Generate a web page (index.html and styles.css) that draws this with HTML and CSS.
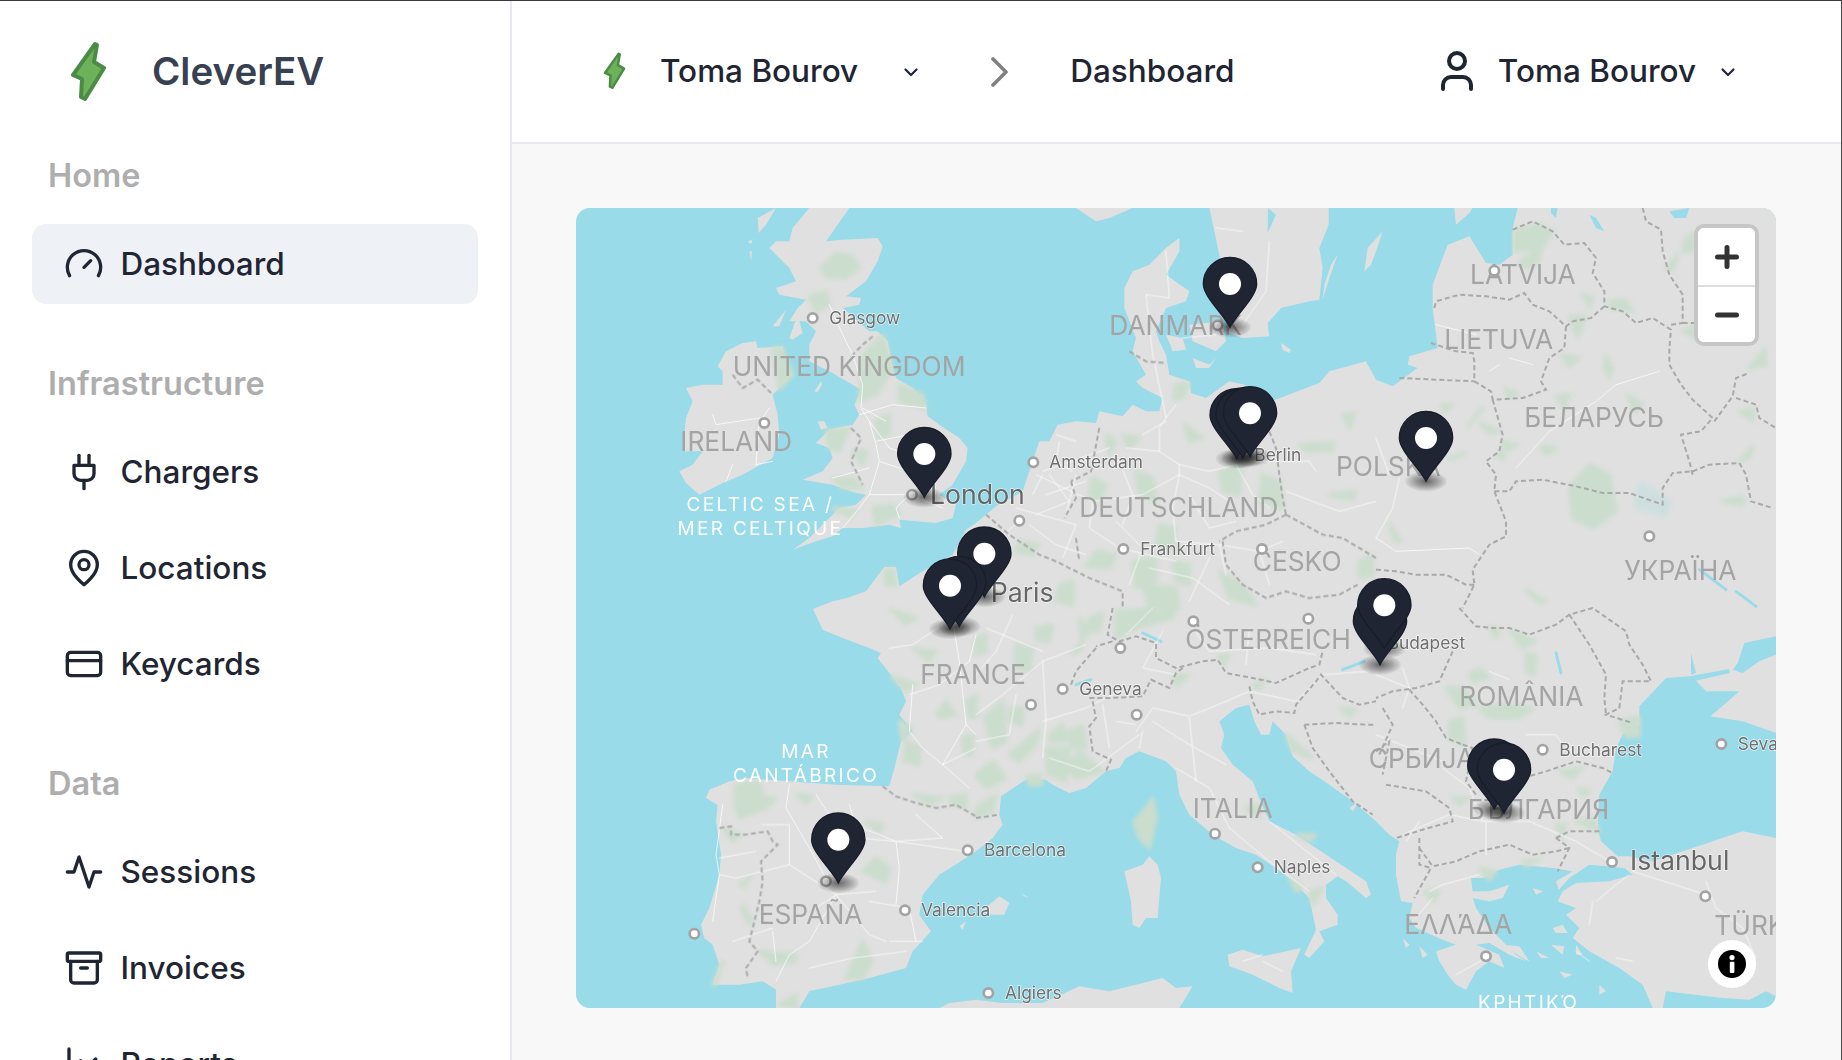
FILE: index.html
```html
<!DOCTYPE html>
<html lang="en">
<head>
<meta charset="utf-8">
<title>CleverEV – Dashboard</title>
<link rel="stylesheet" href="styles.css">
</head>
<body class="app">
<svg class="defs" width="0" height="0" aria-hidden="true">
  <defs>
    <symbol id="bolt" viewBox="0 0 37 60"><path class="bolt-shape" d="M25 3 3 34l9 4-1 18 4 2 19-31-10-6 3-17Z"/></symbol>
    <symbol id="chev" viewBox="0 0 16 16"><path d="m2.5 5.5 5.5 5.5 5.5-5.5"/></symbol>
    <radialGradient id="sh"><stop offset="0" stop-color="#000" stop-opacity=".55"/><stop offset=".55" stop-color="#000" stop-opacity=".28"/><stop offset="1" stop-color="#000" stop-opacity=".03"/></radialGradient>
    <filter id="soft" x="-2%" y="-2%" width="104%" height="104%"><feGaussianBlur stdDeviation="7"/></filter>
    <g id="pin"><path class="pin-body" d="M0 0C-18-38-80-92-80-130A80 80 0 1 1 80-130C80-92 18-38 0 0Z"/><ellipse class="pin-dot" cx="0" cy="-130" rx="33" ry="33"/></g>
    <ellipse id="pinsh" rx="63" ry="30" cx="0" cy="0" fill="url(#sh)"/>
  </defs>
</svg>

<aside class="sidebar">
  <div class="brand">
    <svg class="brand-bolt"><use href="#bolt"/></svg>
    <span class="brand-name">CleverEV</span>
  </div>
  <nav class="nav">
    <section class="nav-section">
      <h2 class="nav-label">Home</h2>
      <a class="nav-item is-active"><svg class="ico" viewBox="0 0 24 24"><path d="m12 14 4-4"/><path d="M3.34 19a10 10 0 1 1 17.32 0"/></svg>Dashboard</a>
    </section>
    <section class="nav-section">
      <h2 class="nav-label">Infrastructure</h2>
      <a class="nav-item"><svg class="ico" viewBox="0 0 24 24"><path d="M12 22v-5"/><path d="M9 8V2"/><path d="M15 8V2"/><path d="M18 8v5a4 4 0 0 1-4 4h-4a4 4 0 0 1-4-4V8Z"/></svg>Chargers</a>
      <a class="nav-item"><svg class="ico" viewBox="0 0 24 24"><path d="M20 10c0 6-8 12-8 12s-8-6-8-12a8 8 0 0 1 16 0Z"/><circle cx="12" cy="10" r="3"/></svg>Locations</a>
      <a class="nav-item"><svg class="ico" viewBox="0 0 24 24"><rect x="2" y="5" width="20" height="14" rx="2"/><path d="M2 10h20"/></svg>Keycards</a>
    </section>
    <section class="nav-section">
      <h2 class="nav-label">Data</h2>
      <a class="nav-item"><svg class="ico" viewBox="0 0 24 24"><path d="M22 12h-4l-3 9L9 3l-3 9H2"/></svg>Sessions</a>
      <a class="nav-item"><svg class="ico" viewBox="0 0 24 24"><rect x="2" y="3" width="20" height="5" rx="1"/><path d="M4 8v11a2 2 0 0 0 2 2h12a2 2 0 0 0 2-2V8"/><path d="M10 12h4"/></svg>Invoices</a>
      <a class="nav-item"><svg class="ico" viewBox="0 0 24 24"><path d="M3 3v18h18"/><path d="m19 9-5 5-4-4-3 3"/></svg>Reports</a>
    </section>
  </nav>
</aside>

<div class="main">
  <header class="topbar">
    <svg class="top-bolt"><use href="#bolt"/></svg>
    <span class="top-org">Toma Bourov</span>
    <svg class="chev chev-org"><use href="#chev"/></svg>
    <svg class="crumb-sep" viewBox="0 0 17 30"><path d="m2 2 13 13L2 28"/></svg>
    <span class="crumb-page">Dashboard</span>
    <div class="user">
      <svg class="user-ico" viewBox="0 0 24 24"><path d="M19 21v-2a4 4 0 0 0-4-4H9a4 4 0 0 0-4 4v2"/><circle cx="12" cy="7" r="4"/></svg>
      <span class="user-name">Toma Bourov</span>
      <svg class="chev"><use href="#chev"/></svg>
    </div>
  </header>

  <main class="content">
    <div class="map">
      <svg class="map-art" viewBox="0 0 3600 2400" role="img" aria-label="Map of Europe with charger locations">
        <rect class="sea" width="3600" height="2400"/>

        <!-- land -->
        <path class="land" d="M700 0H820L750 100 800 95 905 90 920 115 905 160 870 220 810 265 855 270 850 290 800 300 880 370 905 370 935 400 950 480 960 510 1010 540 1050 590 1055 625 1090 650 1150 690 1175 720 1170 760 1130 830 1090 860 1140 890 1130 930 1080 945 970 935 975 960 940 950 860 960 800 960 770 985 720 1000 650 1025 700 990 760 930 790 900 840 890 870 860 840 855 770 830 680 815 740 790 770 750 760 720 720 705 760 665 830 650 850 620 835 590 855 545 830 530 760 490 700 460 700 410 720 370 690 340 640 340 665 300 690 275 610 260 600 240 660 220 640 180 580 120 600 100 640 100 650 60Z"/>
        <path class="land" d="M330 540 380 530 440 530 440 490 425 475 450 430 500 405 540 400 545 420 620 415 625 470 650 500 630 520 590 560 605 620 610 680 590 750 500 800 440 825 370 860 330 825 310 790 350 770 380 730 320 730 330 630 350 580Z"/>
        <path class="land" d="M715 550 735 520 738 530 725 552ZM725 640 745 640 755 660 735 665ZM515 100 530 95 525 108ZM520 130 528 130 525 160ZM545 30 600 0 570 50 548 75ZM590 355 630 305 610 355ZM640 390 665 320 680 375 650 395Z"/>
        <!-- mainland -->
        <path class="land" d="M600 2400 600 2345 560 2320 490 2330 410 2330 430 2270 410 2210 385 2190 375 2150 400 2100 430 2000 435 1940 420 1840 425 1790 390 1770 400 1745 460 1720 510 1710 640 1720 780 1730 940 1735 955 1680 975 1600 1010 1570 970 1520 990 1480 975 1440 905 1350 915 1335 880 1320 800 1290 740 1265 711 1203 770 1180 813 1170 870 1150 925 1077 960 1077 970 1135 1040 1090 1130 1040 1170 965 1200 945 1260 895 1340 850 1360 790 1390 700 1420 700 1445 650 1500 640 1560 645 1570 610 1640 625 1670 590 1710 610 1750 610 1760 570 1700 540 1680 520 1710 500 1670 430 1680 390 1645 300 1645 240 1670 190 1720 170 1770 120 1810 90 1810 130 1770 200 1840 250 1830 280 1770 300 1740 370 1750 400 1770 440 1780 500 1840 520 1845 555 1890 570 1960 520 2005 530 2090 578 2230 525 2260 490 2370 460 2400 515 2450 535 2525 480 2495 470 2500 445 2585 420 2570 300 2570 230 2615 110 2680 85 2730 165 2770 170 2810 140 2810 60 2825 0H3600V2365L3570 2350 3520 2375 3440 2370 3270 2350 3260 2400 3230 2400 3200 2330 3130 2280 3040 2230 2990 2190 3010 2160 2970 2120 3000 2100 2945 2080 2960 2050 3000 2025 3100 2020 3170 2000 3145 1980 3040 1970 2980 2010 2948 2045 2940 2020 2990 1990 2930 1980 2830 1970 2770 1985 2720 2010 2685 2010 2690 2050 2740 2050 2800 2030 2780 2070 2740 2080 2690 2070 2700 2100 2740 2160 2820 2240 2850 2260 2800 2240 2740 2205 2700 2210 2770 2240 2785 2280 2740 2260 2700 2290 2670 2345 2640 2330 2615 2300 2590 2260 2580 2230 2640 2210 2600 2195 2520 2160 2500 2130 2510 2085 2475 2080 2460 2000 2460 1940 2470 1900 2440 1880 2400 1840 2330 1780 2260 1730 2200 1690 2150 1645 2130 1580 2090 1540 2080 1580 2055 1580 2035 1540 2020 1490 1980 1500 1930 1540 1945 1580 1935 1620 1970 1670 2030 1720 2050 1770 2080 1840 2160 1880 2220 1920 2310 1980 2370 2020 2385 2060 2370 2070 2310 2020 2285 2005 2250 2030 2250 2070 2285 2120 2285 2150 2230 2170 2245 2200 2200 2250 2185 2240 2220 2165 2200 2070 2150 2020 2100 1980 2040 1940 1980 1920 1910 1880 1840 1820 1810 1760 1800 1690 1770 1660 1690 1630 1650 1650 1630 1680 1590 1690 1530 1740 1480 1755 1430 1730 1410 1715 1350 1715 1275 1765 1270 1820 1280 1850 1250 1890 1200 1930 1170 1950 1090 2000 1040 2060 1030 2120 1065 2170 1010 2230 990 2280 880 2310 790 2330 700 2350 670 2400Z"/>
        <!-- Black Sea, Azov, Marmara -->
        <path class="sea" d="M3190 1495 3270 1410 3340 1405 3460 1383 3460 1395 3360 1418 3390 1450 3490 1450 3450 1485 3403 1525 3500 1540 3600 1575V1890L3500 1870 3350 1920 3230 1960 3160 1945 3125 1945 3075 1900 3065 1860 3070 1760 3110 1690 3120 1620 3140 1580 3190 1550Z"/>
        <path class="sea" d="M3470 1385 3485 1365 3505 1305 3600 1285V1340L3550 1360 3500 1395ZM3345 1335 3360 1395 3345 1400Z"/>
        <!-- islands -->
        <path class="land" d="M1500 0H1670L1600 30 1560 40 1530 20ZM1900 0 1915 70 1930 140 1945 300 1960 375 2000 390 2080 385 2075 345 2115 300 2200 280 2230 275 2240 180 2230 120 2258 50 2258 0ZM2285 140 2260 210 2240 275 2245 230 2265 170ZM2365 190 2375 120 2420 70 2400 130 2385 170ZM2115 405 2145 425 2140 435 2120 425ZM1770 380 1820 390 1830 425 1790 430ZM1840 350 1940 340 1950 400 1920 430 1850 400ZM1850 450 1900 470 1920 450 1900 480 1860 480ZM2635 0 2690 0 2680 15 2640 50ZM2320 1800 2350 1780 2330 1810Z"/>
        <path class="land" d="M1720 1945 1745 1970 1755 2010 1745 2130 1710 2130 1690 2160 1670 2150 1665 2080 1645 1990 1700 1970ZM1955 2240 2000 2225 2060 2245 2175 2220 2145 2290 2150 2355 2110 2340 2030 2300 1960 2275ZM1215 2110 1240 2090 1270 2065 1300 2085 1285 2120 1245 2120ZM1335 2055 1360 2070 1345 2065ZM1150 2155 1170 2140 1160 2165ZM1090 2400 1120 2385 1200 2375 1280 2385 1400 2385 1510 2335 1600 2350 1680 2330 1760 2310 1800 2340 1850 2335 1810 2400Z"/>
        <path class="land" d="M2930 2160 2960 2150 2975 2175 2940 2175ZM2925 2210 2965 2215 2960 2240ZM2780 2210 2830 2215 2860 2260 2840 2250ZM2870 2040 2900 2050 2880 2060ZM2880 2230 2920 2250 2895 2250ZM2530 2215 2555 2240 2540 2250ZM2480 2190 2500 2210 2490 2220ZM3000 2210 3020 2240 3000 2240ZM2950 2290 2990 2300 2965 2310ZM3070 2330 3090 2350 3070 2360Z"/>

        <!-- inland water -->
        <path class="water" d="M2076 0 2100 20 2075 75ZM2925 0 2945 0 2940 30 2925 15ZM3040 20 3060 30 3085 70 3060 60ZM3280 10 3340 0 3330 30 3295 30Z"/>
        <path class="water-line" d="M3370 1085 3450 1145M3480 1150 3540 1195M2300 1385 2365 1360M1700 1275 1755 1300M1500 1430 1545 1415M2940 1335 2955 1395"/>

        <!-- forests -->
        <g class="forest">
          <path d="M735 180 780 135 830 145 850 180 810 210 750 205ZM700 265 750 250 760 290 720 310ZM590 420 620 420 650 500 610 545ZM750 670 820 660 790 730 760 720ZM860 440 920 380 950 480 900 560 850 580ZM970 530 1040 560 1050 600 970 580ZM770 900 840 905 820 925ZM890 900 950 890 970 920 900 950ZM900 640 940 620 940 680 910 690ZM830 730 870 730 860 770ZM770 810 830 810 860 840 800 840ZM925 1090 950 1080 960 1130 930 1130Z"/>
          <g transform="translate(1200)"><path d="M600 530 640 525 620 570 590 575ZM625 650 680 690 640 700ZM390 680 420 700 400 740ZM440 680 490 690 460 720ZM480 790 530 810 540 880 490 860ZM730 790 800 770 790 860 740 850ZM860 800 910 820 920 900 850 880ZM970 710 1070 705 1070 725 990 730ZM1100 620 1135 615 1120 660ZM1060 860 1140 850 1130 875ZM550 950 600 960 590 1020 540 1010ZM470 1060 540 1050 540 1120 480 1140ZM360 1030 420 1040 400 1080 330 1075ZM590 1060 640 1070 640 1130 600 1120ZM730 1090 800 1130 840 1190 760 1170ZM500 1130 600 1140 610 1200 520 1200ZM250 1130 290 1120 290 1190 240 1180ZM130 1000 190 1010 170 1040 120 1030ZM350 810 390 830 370 880 340 860ZM1150 1060 1190 1040 1190 1100 1150 1110Z"/></g>
          <g transform="translate(2400)"><path d="M415 70 490 50 530 70 500 120 415 130ZM430 165 490 120 490 160 450 180ZM930 90 970 70 950 130 920 130ZM870 180 905 140 890 190ZM620 260 650 270 640 295ZM700 280 750 275 770 310 700 300ZM580 325 630 325 605 390ZM555 440 610 450 580 475ZM690 445 710 480 700 510 685 480ZM540 565 580 560 565 600ZM385 540 425 555 400 570ZM195 590 230 590 205 610ZM275 655 320 600 300 625ZM310 645 370 670 340 675ZM380 700 425 710 395 725 360 745 385 755ZM755 560 800 590 775 610ZM495 715 540 720 510 740ZM1090 610 1130 600 1130 640ZM580 840 640 770 700 800 720 910 650 960 590 930ZM1040 880 1100 865 1100 890ZM1090 760 1130 715 1120 750ZM1120 480 1165 425 1170 470ZM920 370 965 350 965 395ZM450 1145 510 1180 490 1185ZM40 945 75 1000 55 1000ZM215 750 270 735 235 750Z"/></g>
          <g transform="translate(0 1200)"><path d="M945 5 1020 30 990 50ZM970 340 1010 360 980 400ZM990 400 1030 420 1030 470 985 460ZM1080 320 1110 280 1140 320 1100 330ZM1160 390 1190 380 1190 440 1165 440ZM1170 280 1200 260 1200 330 1180 330ZM1010 120 1080 130 1060 160ZM480 530 550 520 560 570 600 570 570 600 490 630 480 600ZM665 560 710 565 690 585ZM440 660 490 680 470 700ZM860 790 900 750 940 780 930 820 880 800ZM870 640 920 650 910 675ZM490 830 525 805 500 835ZM550 1030 660 1040 660 1060 590 1070ZM810 1110 860 1000 890 1060 860 1110ZM1010 560 1100 570 1060 590ZM1120 570 1170 560 1170 600 1130 590ZM410 1130 440 1060 420 1125ZM500 890 530 940 520 950 500 910ZM610 1190 660 1160 660 1200ZM945 205 1020 230 990 250Z"/></g>
          <g transform="translate(1200 1200)"><path d="M120 110 170 120 160 190 120 180ZM340 30 380 15 370 70 330 70ZM180 60 230 50 220 100 180 95ZM420 10 540 0 480 60 420 90ZM480 30 600 0 590 30 480 60ZM25 330 80 280 90 400 50 420ZM100 300 140 300 140 350 100 340ZM100 440 190 365 180 410 130 460ZM210 420 280 420 270 520 215 500ZM270 370 320 355 330 420 290 420ZM270 480 310 430 380 490 300 510ZM220 380 260 350 270 400 220 400ZM0 500 50 460 90 510 30 540ZM0 600 60 560 50 610 0 630ZM0 90 30 80 30 130 0 140ZM150 505 190 500 200 530 160 530ZM1095 300 1140 305 1120 325ZM590 200 640 200 600 235ZM725 145 760 140 745 170ZM830 230 870 215 845 245ZM930 380 1010 450 950 430ZM960 680 1020 680 1000 700ZM940 810 980 840 960 850ZM1000 850 1040 840 1010 890ZM810 600 850 590 850 630ZM530 570 540 630 520 720 490 690 475 640 510 600ZM310 30 340 70 290 140 320 120Z"/></g>
          <g transform="translate(2400 1200)"><path d="M280 200 310 180 340 210 290 220ZM210 240 260 240 300 290 250 300ZM310 300 400 290 470 300 430 330 340 330ZM340 60 370 60 360 90ZM400 65 480 100 440 120ZM450 140 480 140 475 200 450 190ZM220 340 260 330 265 410 220 390ZM730 340 790 325 790 385 750 385ZM550 490 620 480 590 510ZM605 540 640 550 620 565ZM540 650 570 650 560 690ZM600 640 650 630 670 670ZM230 570 280 570 250 590ZM310 780 360 790 340 815ZM145 850 190 850 170 880ZM440 760 490 755 450 775Z"/></g>
        </g>
        <path class="marsh" d="M3170 880 3190 820 3240 840 3290 885 3270 930 3180 905Z"/>

        <!-- roads -->
        <g class="roads">
          <path d="M760 290 800 380 830 440 860 530 855 600 880 640 900 710 910 760 880 860 850 900 800 960M850 620 950 590 1050 600M880 640 940 720 1000 740M910 760 1000 790M1000 860 960 900 970 930M1000 860 1100 900M880 860 1000 860M900 700 1000 680M770 810 880 780M410 620 420 650 550 630M550 640 540 770M470 770 450 820M540 770 590 760M580 600 560 630M860 600 930 640"/>
          <g transform="translate(1200)"><path d="M570 630 600 590M570 630 550 660 550 730 610 770 700 790 780 770 830 760M550 730 450 720M570 640 500 680M610 770 610 800 700 840 760 880M240 680 300 700M200 790 400 720M200 800 170 860M180 800 350 880M350 880 340 960 430 1020M430 1020 600 1060M350 880 500 860 610 800M610 800 590 900 600 1000M780 770 830 860 880 900M1000 760 830 760M1090 910 930 850M1090 910 1200 880M1020 790 1000 760M120 900 300 950M60 1000 130 940M300 950 260 1050M600 1000 730 1010M730 1010 850 1030M850 1030 920 1000M850 1030 880 1130M730 1010 750 1100M510 260 580 270 570 130M510 260 530 440 570 630M620 390 720 380M880 100 870 250 800 350M720 60 800 70M220 800 280 880 180 920M300 800 270 920M420 940 500 1020 460 1130M700 1050 640 1180M210 860 330 820M160 950 240 1010 330 1040M430 760 470 860 440 950M640 860 700 960 780 940M520 1080 650 1110 760 1190M250 700 240 760 290 790"/></g>
          <g transform="translate(2400)"><path d="M70 810 50 900 0 990M0 990 60 1030 280 1020 310 1040M0 690 40 800M180 350 300 380M400 450 470 470M850 490 720 530 660 580 520 670 420 780M370 470 340 490"/></g>
          <g transform="translate(0 1200)"><path d="M720 900 780 860 900 850M780 860 640 770 480 810 430 800M780 860 700 1000 640 1040 600 1120M780 860 880 980 930 1000M880 880 1000 900M640 530 630 600 700 720 760 830M960 700 1100 690M760 620 960 700 1170 730M960 700 970 780 960 890M440 590 420 740 430 800 410 940M640 770 640 650 560 650M430 750 540 730M940 1000 1040 1000M700 1080 830 1050 990 1030M590 970 600 1060M1100 50 1010 110 940 120M1010 230 1000 370 1040 420 1100 470 1180 540M1100 470 1200 420M1000 260 1090 230 1180 160M1180 160 1200 80M1130 40 1150 160 1170 350 1200 380M1170 350 1100 470M1000 900 1020 1000M470 1000 590 960M820 590 850 690 960 700M1020 620 1100 690M720 560 760 620"/></g>
          <g transform="translate(1200 1200)"><path d="M0 320 80 260 200 160 330 110M200 160 210 340 200 450M220 450 340 490 490 380M200 340 330 300 430 250M480 370 530 300 640 325 750 280M530 340 640 410 750 470M640 330 660 520M500 370 490 420M600 480 700 540 760 660M760 660 880 760M880 760 1000 850M30 60 200 130M450 80 530 0M650 60 700 130 880 120 1020 140M750 280 820 250 960 280 1040 200M1040 200 1180 190M880 640 1080 800M860 1060 920 1090M800 1060 860 1040M60 130 0 200M420 340 480 350M110 20 60 130M560 70 500 180 600 200M820 60 810 170M120 260 100 380 0 400M380 290 400 420"/></g>
          <g transform="translate(2400 1200)"><path d="M0 200 100 240M80 180 100 240M100 240 80 300M0 380 200 460M200 480 280 540 320 640 460 640 600 700 700 760M320 640 220 620 80 680M130 640 90 700M330 640 330 740M200 830 310 800M170 870 120 930M200 830 160 850M240 1100 330 1050M660 880 720 830 760 800M650 880 640 950M990 820 1020 900 1100 960 1140 1050M720 1050 770 1060M600 1030 640 1060M450 380 540 380 560 410M340 190 400 215M770 790 990 860"/></g>
        </g>

        <!-- borders -->
        <g class="borders">
          <path d="M890 385 860 410 830 440M825 660 855 690 825 760 860 830M470 500 500 540 545 515 585 555"/>
          <g transform="translate(1200)"><path d="M460 430 510 460 570 465M880 670 900 720 910 800 920 870 930 920M930 920 870 950 780 970 730 1000M930 920 1040 980 1100 990 1200 1050M740 1000 750 1070 800 1130 870 1170 930 1150 1000 1170 1090 1160 1145 1130M370 660 345 790 285 820M285 820 300 870 265 930M30 920 100 980 190 1040 240 1060 300 1090 340 1110 440 1150 440 1200M300 990 310 1060"/></g>
          <g transform="translate(2400)"><path d="M410 65 470 40 530 70 565 110 625 105 660 150 650 195 685 250 685 295 740 310 780 345 830 330 885 365 880 420 880 470 915 530 950 575 1010 630 975 670 915 680 940 760 950 800M175 300 180 280 250 260 330 265 400 275 445 255 470 290 520 310 570 355 590 340 645 330 685 295M570 355 565 420 520 450 495 520 510 545 440 570 350 575 345 550 295 520 295 460 290 435 240 430 165 405M70 510 180 515 295 520M350 575 380 680 370 730 330 760 360 800 355 850 390 940 390 985 340 1010 290 1085 295 1130 260 1200M355 850 400 850 420 820 500 815 600 835 680 855 760 855 860 890 860 840 890 795 950 790 1000 770 1090 765 1110 800 1125 880 1190 900M800 0 810 40 855 65 860 130 880 200 920 260 920 345 885 350M1015 640 1070 565 1080 510 1120 495M1080 570 1140 590 1150 630 1200 660M920 345 1010 345M0 1085 60 1090 120 1100 210 1100 270 1130 295 1130"/></g>
          <g transform="translate(0 1200)"><path d="M920 535 960 565 1020 585 1080 600 1140 590 1200 625M430 660 465 655 465 680 510 680 575 670 590 700 605 710 555 760 560 820 550 880 520 1000 545 1030 510 1080 515 1110"/></g>
          <g transform="translate(1200 1200)"><path d="M0 630 70 620M410 0 395 80 430 100 480 85 540 105 540 150 600 180 680 160 725 155 750 195 830 210 900 225 1000 180 1030 170 1040 130M360 120 300 190 285 230M350 280 360 330 340 355 350 430 405 455 390 490M340 270 400 270 500 265 525 215 580 240 600 195 620 180M820 235 830 280 850 320 900 310 955 315 960 290 1020 220 1035 200 1100 270 1150 290 1200 280M985 350 1010 420 1060 490 1130 580 1190 620M985 350 1080 345 1170 350 1200 350M410 100 360 115"/></g>
          <g transform="translate(2400 1200)"><path d="M250 0 300 55 350 60 400 60 460 80 540 50 580 20 650 0 750 70 760 110 800 170 825 220 770 220 740 220 730 300 690 320 770 345M580 20 640 110 690 200 685 270 690 320M230 130 190 220 120 240 50 250 0 270M100 245 140 290 180 340 210 390 260 410M260 410 290 420 270 520 300 560M440 510 510 490 600 460 680 480 710 495M130 720 170 775 240 760 310 730 400 710 470 740 540 730 580 720M540 690 580 720 545 790M540 690 580 670 670 670M30 530 150 550 220 600 230 640 140 665 60 690M20 300 50 350 10 440M130 690 130 770 165 780 115 870M0 430 40 400 20 500"/></g>
        </g>

        <!-- sea labels -->
        <g class="lbl-sea">
          <text x="553" y="908">CELTIC SEA /</text>
          <text x="553" y="982">MER CELTIQUE</text>
          <text x="690" y="1650">MAR</text>
          <text x="690" y="1722">CANTÁBRICO</text>
          <text x="2858" y="2402">ΚΡΗΤΙΚΌ</text>
        </g>

        <!-- country labels -->
        <g class="lbl-country">
          <text x="470" y="503">UNITED KINGDOM</text>
          <text x="313" y="728">IRELAND</text>
          <text x="1600" y="380">DANMARK</text>
          <text x="1510" y="928">DEUTSCHLAND</text>
          <text x="2280" y="805">POLSKA</text>
          <text x="2030" y="1088">ČESKO</text>
          <text x="2682" y="228">LATVIJA</text>
          <text x="2605" y="422">LIETUVA</text>
          <text x="2845" y="658">БЕЛАРУСЬ</text>
          <text x="3145" y="1115">УКРАЇНА</text>
          <text x="1033" y="1428">FRANCE</text>
          <text x="1828" y="1322">ÖSTERREICH</text>
          <text x="2650" y="1493">ROMÂNIA</text>
          <text x="2378" y="1680">СРБИЈА</text>
          <text x="2675" y="1832">БЪЛГАРИЯ</text>
          <text x="1850" y="1830">ITALIA</text>
          <text x="548" y="2147">ESPAÑA</text>
          <text x="2485" y="2178">ΕΛΛΆΔΑ</text>
          <text x="3415" y="2180">TÜRKİYE</text>
        </g>

        <!-- city dots -->
        <g class="dots">
          <circle cx="710" cy="330" r="14"/><circle cx="565" cy="645" r="14"/><circle cx="1008" cy="860" r="14"/><circle cx="1372" cy="763" r="14"/><circle cx="1330" cy="938" r="14"/><circle cx="1642" cy="1023" r="14"/><circle cx="2058" cy="1023" r="14"/><circle cx="1925" cy="352" r="14"/><circle cx="2755" cy="188" r="14"/><circle cx="3220" cy="985" r="14"/><circle cx="1852" cy="1240" r="14"/><circle cx="2197" cy="1232" r="14"/><circle cx="1633" cy="1320" r="14"/><circle cx="1460" cy="1443" r="14"/><circle cx="1365" cy="1490" r="14"/><circle cx="1682" cy="1520" r="14"/><circle cx="1917" cy="1877" r="14"/><circle cx="2045" cy="1978" r="14"/><circle cx="1175" cy="1927" r="14"/><circle cx="987" cy="2107" r="14"/><circle cx="750" cy="2020" r="14"/><circle cx="355" cy="2177" r="14"/><circle cx="1237" cy="2355" r="14"/><circle cx="2900" cy="1625" r="14"/><circle cx="3436" cy="1608" r="14"/><circle cx="3108" cy="1962" r="14"/><circle cx="2730" cy="2245" r="14"/><circle cx="3388" cy="2065" r="14"/>
        </g>

        <!-- city labels -->
        <g class="lbl-city">
          <text x="760" y="348">Glasgow</text>
          <text x="1420" y="780">Amsterdam</text>
          <text x="1693" y="1040">Frankfurt</text>
          <text x="2035" y="760">Berlin</text>
          <text x="1510" y="1460">Geneva</text>
          <text x="2093" y="1996">Naples</text>
          <text x="1224" y="1943">Barcelona</text>
          <text x="1035" y="2125">Valencia</text>
          <text x="1287" y="2373">Algiers</text>
          <text x="2435" y="1323">Budapest</text>
          <text x="2950" y="1643">Bucharest</text>
          <text x="3485" y="1627">Sevastopol</text>
        </g>
        <g class="lbl-big">
          <text x="1062" y="888">London</text>
          <text x="1244" y="1182">Paris</text>
          <text x="3162" y="1987">Istanbul</text>
        </g>

        <!-- pin shadows -->
        <use href="#pinsh" x="1045" y="868"/><use href="#pinsh" x="1962" y="358"/><use href="#pinsh" x="1982" y="752"/><use href="#pinsh" x="2000" y="750"/><use href="#pinsh" x="2022" y="746"/><use href="#pinsh" x="2550" y="820"/><use href="#pinsh" x="1225" y="1167"/><use href="#pinsh" x="1122" y="1263"/><use href="#pinsh" x="1150" y="1255"/><use href="#pinsh" x="787" y="2025"/><use href="#pinsh" x="2412" y="1370"/><use href="#pinsh" x="2425" y="1322"/><use href="#pinsh" x="2755" y="1803"/><use href="#pinsh" x="2784" y="1815"/>

        <!-- pins -->
        <use href="#pin" x="1045" y="868"/><use href="#pin" x="1962" y="358"/><use href="#pin" x="1982" y="752"/><use href="#pin" x="2000" y="750"/><use href="#pin" x="2022" y="746"/><use href="#pin" x="2550" y="820"/><use href="#pin" x="1225" y="1167"/><use href="#pin" x="1150" y="1255"/><use href="#pin" x="1122" y="1263"/><use href="#pin" x="787" y="2025"/><use href="#pin" x="2412" y="1370"/><use href="#pin" x="2425" y="1322"/><use href="#pin" x="2755" y="1803"/><use href="#pin" x="2784" y="1815"/>
      </svg>

      <div class="zoom">
        <button class="zoom-btn" aria-label="Zoom in"><svg viewBox="0 0 24 24"><path d="M2.5 12h19M12 2.5v19"/></svg></button>
        <button class="zoom-btn" aria-label="Zoom out"><svg viewBox="0 0 24 24"><path d="M2.5 12h19"/></svg></button>
      </div>
      <button class="info" aria-label="Information"><svg viewBox="0 0 28 28"><circle cx="14" cy="14" r="14"/><circle class="info-mark" cx="14" cy="7.6" r="2.6"/><rect class="info-mark" x="11.8" y="11.8" width="4.6" height="11.2" rx="1"/></svg></button>
    </div>
  </main>
</div>
</body>
</html>
```

FILE: styles.css
```css
* { box-sizing: border-box; }
html { margin: 0; height: 100%; overflow: hidden; }
body { margin: 0; height: 100%; }
.app {
  display: flex;
  height: 100vh;
  overflow: hidden;
  border-top: 1px solid #3a3a3a;
  border-right: 1px solid #4a4a4a;
  background: #f8f8f8;
  font-family: Inter, "Noto Sans", sans-serif;
  color: #1f2533;
}
.defs { position: absolute; }

/* sidebar */
.sidebar {
  flex: 0 0 512px;
  background: #fff;
  border-right: 2px solid #e8e8ef;
  overflow: hidden;
}
.brand {
  display: flex;
  align-items: center;
  height: 143px;
  padding: 0 0 3px 70px;
  gap: 45px;
}
.brand-bolt { width: 37px; height: 60px; flex: none; }
.bolt-shape { fill: #6db25a; stroke: #4b8b45; stroke-width: 4; stroke-linejoin: round; }
.brand-name { font-size: 38.5px; font-weight: 600; color: #374151; }
.nav { display: flex; flex-direction: column; gap: 56px; padding: 8px 32px 0; }
.nav-section { display: flex; flex-direction: column; gap: 16px; }
.nav-label {
  margin: 0 0 8px;
  height: 48px;
  line-height: 48px;
  padding-left: 16px;
  font-size: 32.5px;
  font-weight: 600;
  color: #aeaeae;
}
.nav-item {
  display: flex;
  align-items: center;
  gap: 16.5px;
  height: 80px;
  flex: none;
  padding: 0 0 2px 32px;
  border-radius: 14px;
  font-size: 31.5px;
  font-weight: 500;
}
.nav-item .ico { margin-top: 2px; }
.nav-item.is-active { background: #eef1f6; }
.ico { width: 40px; height: 40px; flex: none; fill: none; stroke: #1f2533; stroke-width: 2; stroke-linecap: round; stroke-linejoin: round; }

/* top bar */
.main { flex: 1; min-width: 0; min-height: 0; display: flex; flex-direction: column; }
.topbar {
  flex: 0 0 143px;
  display: flex;
  align-items: center;
  padding: 0 105px 2px 91px;
  background: #fff;
  border-bottom: 2px solid #e8e8ef;
  font-size: 31.5px;
  font-weight: 500;
}
.top-bolt { width: 23px; height: 37px; flex: none; }
.top-org { margin-left: 34px; }
.chev { width: 16px; height: 16px; flex: none; margin-top: 2px; fill: none; stroke: #1f2533; stroke-width: 2.2; stroke-linecap: round; stroke-linejoin: round; }
.chev-org { margin-left: 45px; }
.crumb-sep { width: 17px; height: 30px; margin-left: 72px; margin-top: 2px; flex: none; fill: none; stroke: #808080; stroke-width: 3.6; stroke-linecap: round; stroke-linejoin: round; }
.crumb-page { margin-left: 62px; }
.user { margin-left: auto; display: flex; align-items: center; }
.user-ico { width: 48px; height: 48px; flex: none; fill: none; stroke: #1f2533; stroke-width: 2; stroke-linecap: round; stroke-linejoin: round; }
.user-name { margin-left: 17px; }
.user .chev { margin-left: 24px; }

/* map */
.content { flex: 1; padding: 64px; min-height: 0; }
.map {
  position: relative;
  width: 1200px;
  height: 800px;
  border-radius: 14px;
  overflow: hidden;
}
.map-art { display: block; width: 1200px; height: 800px; font-family: Inter, "Noto Sans", sans-serif; }
.sea { fill: #99dbe9; }
.land { fill: #e0e0e0; }
.water { fill: #99dbe9; }
.water-line { fill: none; stroke: #99dbe9; stroke-width: 9; stroke-linecap: round; }
.forest { fill: #cbddcd; stroke: #cbddcd; stroke-width: 10; stroke-linejoin: round; filter: url(#soft); }
.marsh { fill: #cfdfe0; filter: url(#soft); }
.roads { fill: none; stroke: #fff; stroke-width: 2.6; stroke-linejoin: round; stroke-linecap: round; opacity: .85; }
.borders { fill: none; stroke: #a9a9a9; stroke-width: 6; stroke-dasharray: 15 9; }
.lbl-country text { font-size: 79px; fill: #a4a4a4; }
.lbl-sea text { font-size: 57px; fill: #fff; letter-spacing: 7px; text-anchor: middle; }
.lbl-city text { font-size: 52px; fill: #6e6e6e; stroke: rgba(255,255,255,.75); stroke-width: 4px; paint-order: stroke; }
.lbl-big text { font-size: 80px; fill: #666; stroke: rgba(255,255,255,.6); stroke-width: 4px; paint-order: stroke; }
.dots circle { fill: #fff; stroke: #a3a3a3; stroke-width: 8; }
.pin-body { fill: #1f2532; stroke: #181d29; stroke-width: 4; }
.pin-dot { fill: #fff; }

.zoom {
  position: absolute;
  top: 16px;
  right: 17px;
  width: 65px;
  border: 4px solid #c6c6c6;
  border-radius: 10px;
  overflow: hidden;
  background: #fff;
}
.zoom-btn {
  display: block;
  width: 100%;
  height: 57px;
  padding: 0;
  border: 0;
  background: #fff;
}
.zoom-btn + .zoom-btn { border-top: 2px solid #ddd; }
.zoom-btn svg { display: block; width: 24px; height: 24px; margin: auto; fill: none; stroke: #333; stroke-width: 5; stroke-linecap: round; }
.info {
  position: absolute;
  right: 20px;
  bottom: 20px;
  width: 48px;
  height: 48px;
  padding: 0;
  border: 0;
  border-radius: 50%;
  background: #fff;
  display: flex;
  align-items: center;
  justify-content: center;
}
.info svg { display: block; width: 28px; height: 28px; fill: #000; }
.info .info-mark { fill: #fff; }
```
